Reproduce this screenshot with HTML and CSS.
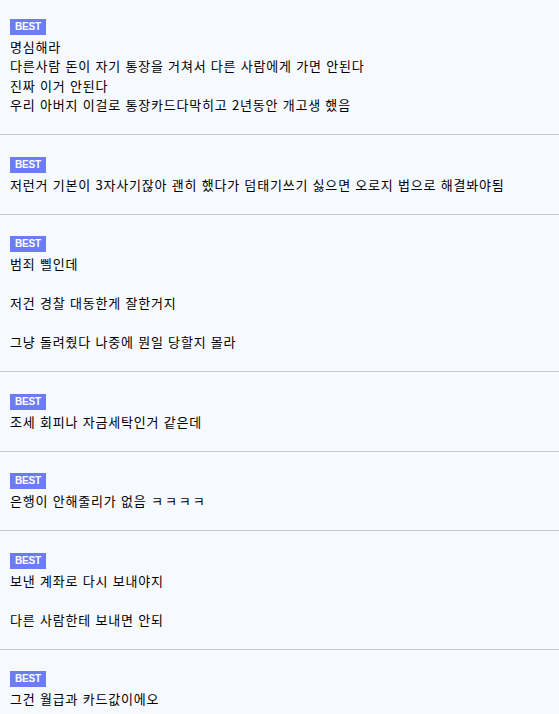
FILE: index.html
```html
<!DOCTYPE html>
<html lang="ko">
<head>
<meta charset="utf-8">
<title>BEST 댓글</title>
<link rel="stylesheet" href="styles.css">
</head>
<body>
<ul class="comments">
  <li class="comment">
    <div class="head"><span class="badge">BEST</span></div>
    <p class="body">명심해라<br>다른사람 돈이 자기 통장을 거쳐서 다른 사람에게 가면 안된다<br>진짜 이거 안된다<br>우리 아버지 이걸로 통장카드다막히고 2년동안 개고생 했음</p>
  </li>
  <li class="comment">
    <div class="head"><span class="badge">BEST</span></div>
    <p class="body">저런거 기본이 3자사기잖아 괜히 했다가 덤태기쓰기 싫으면 오로지 법으로 해결봐야됨</p>
  </li>
  <li class="comment">
    <div class="head"><span class="badge">BEST</span></div>
    <p class="body">범죄 삘인데<br><br>저건 경찰 대동한게 잘한거지<br><br>그냥 돌려줬다 나중에 뭔일 당할지 몰라</p>
  </li>
  <li class="comment">
    <div class="head"><span class="badge">BEST</span></div>
    <p class="body">조세 회피나 자금세탁인거 같은데</p>
  </li>
  <li class="comment">
    <div class="head"><span class="badge">BEST</span></div>
    <p class="body">은행이 안해줄리가 없음 <span class="kk">ㅋㅋㅋㅋ</span></p>
  </li>
  <li class="comment">
    <div class="head"><span class="badge">BEST</span></div>
    <p class="body">보낸 계좌로 다시 보내야지<br><br>다른 사람한테 보내면 안되</p>
  </li>
  <li class="comment">
    <div class="head"><span class="badge">BEST</span></div>
    <p class="body">그건 월급과 카드값이에오</p>
  </li>
</ul>
</body>
</html>
```
FILE: styles.css
```css
html, body {
  margin: 0;
  padding: 0;
  background: #f6f9fe;
}
body {
  font-family: "Noto Sans CJK KR", "Noto Sans", sans-serif;
  font-size: 13px;
  line-height: 19.5px;
  color: #000;
}
.comments {
  list-style: none;
  margin: 0;
  padding: 0;
}
.comment {
  padding: 20px 10px 19.5px;
  border-bottom: 1px solid #c6c8cc;
}
.comment:first-child {
  padding-top: 17px;
}
.head {
  height: 19.5px;
  display: flex;
  align-items: center;
}
.badge {
  display: inline-block;
  width: 36px;
  height: 16px;
  line-height: 16px;
  text-align: center;
  background: #6c7cf6;
  color: #fff;
  font-family: "Liberation Sans", Arial, sans-serif;
  font-weight: bold;
  font-size: 10px;
  letter-spacing: -0.2px;
}
.body {
  margin: 0;
  letter-spacing: 0.8px;
}
.kk {
  letter-spacing: 2px;
}
```
